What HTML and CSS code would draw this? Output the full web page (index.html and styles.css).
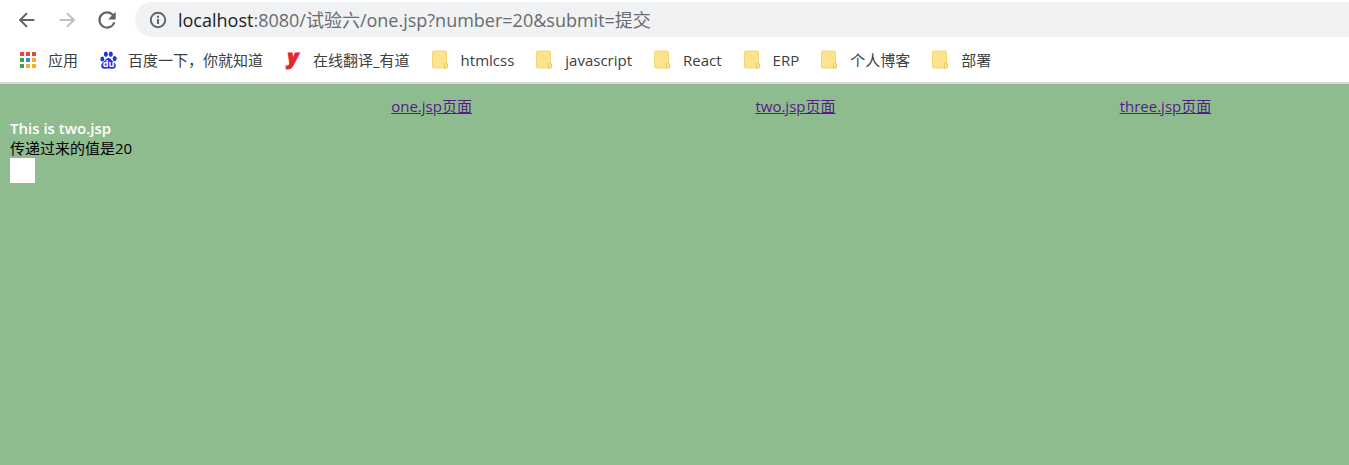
FILE: index.html
```html
<!DOCTYPE html>
<html lang="zh-CN">
<head>
<meta charset="utf-8">
<title>two.jsp</title>
<link rel="stylesheet" href="styles.css">
</head>
<body>
<svg class="symbols" aria-hidden="true">
  <symbol id="folder" viewBox="0 0 18 20">
    <path d="M1.5 1h12a1 1 0 0 1 1 1v16H1.5a1 1 0 0 1-1-1V2a1 1 0 0 1 1-1z" fill="#fde38d" stroke="#f4d77c"/>
    <path d="M12.500 18v-4.500l1-1h1l1 1.500v3.500l-1 .5z" fill="#fde58c" stroke="#efc955"/>
  </symbol>
</svg>
<header class="browser">
  <div class="toolbar">
    <button class="tool" aria-label="后退">
      <svg viewBox="0 0 24 24"><path d="M20 12H5M12 4.500 4.500 12l7.500 7.500" fill="none" stroke="#5f6368" stroke-width="2.200"/></svg>
    </button>
    <button class="tool" aria-label="前进" disabled>
      <svg viewBox="0 0 24 24"><path d="M4 12h15M12 4.500 19.500 12 12 19.500" fill="none" stroke="#bdbfc2" stroke-width="2.200"/></svg>
    </button>
    <button class="tool" aria-label="刷新">
      <svg viewBox="0 0 24 24"><path d="M18.700 7A8.300 8.300 0 1 0 20 14.500" fill="none" stroke="#5f6368" stroke-width="2.300"/><path d="M21.500 3v8.500H13z" fill="#5f6368"/></svg>
    </button>
    <div class="address">
      <svg class="info" viewBox="0 0 18 18"><circle cx="9" cy="9" r="7.200" fill="none" stroke="#5f6368" stroke-width="1.900"/><path d="M9 8v5M9 4.800v2" stroke="#5f6368" stroke-width="2"/></svg>
      <span class="url"><span class="host">localhost</span>:8080/试验六/one.jsp?number=20&amp;submit=提交</span>
    </div>
  </div>
  <nav class="bookmarks" aria-label="书签">
    <a href="#"><svg viewBox="0 0 18 20">
      <path d="M0 2h4v4H0zM6 2h4v4H6zM12 2h4v4h-4z" fill="#e04a3f"/>
      <path d="M0 8h4v4H0zM0 14h4v4H0z" fill="#34a156"/>
      <path d="M6 8h4v4H6z" fill="#3288e6"/>
      <path d="M12 8h4v4h-4zM6 14h4v4H6zM12 14h4v4h-4z" fill="#f4b029"/>
    </svg>应用</a>
    <a href="#"><svg viewBox="0 0 18 20">
      <g fill="#2a2fd6"><ellipse cx="2.300" cy="9" rx="2" ry="2.600"/><ellipse cx="5.900" cy="4.200" rx="2" ry="2.700"/><ellipse cx="10.800" cy="4.200" rx="2" ry="2.700"/><ellipse cx="14.700" cy="8.600" rx="2" ry="2.600"/>
      <path d="M8.400 8c2.300 0 3 2.200 4.600 3.500 1.800 1.400 3.500 3.200 2.600 5.400-1 2.300-4.100 1.700-7.200 1.700s-6 .6-7-1.700c-.9-2.200.8-4 2.500-5.400C5.500 10.200 6.100 8 8.400 8z"/></g>
      <text x="8.500" y="17" class="baidu-mark">du</text>
    </svg>百度一下，你就知道</a>
    <a href="#"><svg viewBox="0 0 18 20"><text x="8" y="14" class="youdao-mark">y</text></svg>在线翻译_有道</a>
    <a class="folder" href="#"><svg><use href="#folder"/></svg>htmlcss</a>
    <a class="folder" href="#"><svg><use href="#folder"/></svg>javascript</a>
    <a class="folder" href="#"><svg><use href="#folder"/></svg>React</a>
    <a class="folder" href="#"><svg><use href="#folder"/></svg>ERP</a>
    <a class="folder" href="#"><svg><use href="#folder"/></svg>个人博客</a>
    <a class="folder" href="#"><svg><use href="#folder"/></svg>部署</a>
  </nav>
</header>
<main class="page">
  <nav class="links">
    <a href="#">one.jsp页面</a>
    <a href="#">two.jsp页面</a>
    <a href="#">three.jsp页面</a>
  </nav>
  <section class="result">
    <p class="title">This is two.jsp</p>
    <p>传递过来的值是20</p>
    <div class="box"></div>
  </section>
</main>
</body>
</html>
```
FILE: styles.css
```css
* { box-sizing: border-box; }
body {
  margin: 0;
  min-height: 100vh;
  display: flex;
  flex-direction: column;
  font: 15px/20px "Open Sans", "Noto Sans CJK SC", sans-serif;
  color: #000;
}
.symbols { display: none; }
.browser { background: #fff; border-bottom: 2px solid #d3d9d4; }
.toolbar { display: flex; align-items: center; padding: 2px 0 0 15px; }
.tool {
  width: 24px;
  height: 24px;
  margin-right: 16px;
  padding: 1px;
  border: 0;
  background: none;
}
.tool svg { display: block; width: 22px; height: 22px; }
.address {
  flex: 1;
  display: flex;
  align-items: center;
  gap: 11px;
  height: 35px;
  padding-left: 14px;
  border-radius: 18px 0 0 18px;
  background: #f1f2f4;
  font-size: 18px;
  color: #686b6f;
}
.info { width: 18px; height: 18px; }
.url { white-space: nowrap; }
.host { color: #202124; }
.bookmarks {
  display: flex;
  gap: 22px;
  height: 45px;
  padding: 0 20px;
  align-items: center;
}
.bookmarks a {
  display: flex;
  align-items: center;
  gap: 10px;
  color: #3c4043;
  text-decoration: none;
  white-space: nowrap;
}
.bookmarks .folder { gap: 11px; }
.bookmarks svg { width: 18px; height: 20px; overflow: visible; }
.baidu-mark { font: bold 9px "Open Sans", sans-serif; fill: #fff; text-anchor: middle; }
.youdao-mark {
  font: italic 800 20px "Open Sans", sans-serif;
  fill: #e4262f;
  stroke: #e4262f;
  text-anchor: middle;
}
.page { flex: 1; background: #8fbc8f; padding-top: 12px; }
.links { display: grid; grid-template-columns: 29% 27% 27% 1fr; }
.links a { justify-self: start; color: #551a8b; white-space: nowrap; }
.links a:first-child { grid-column: 2; }
.result { padding: 2px 10px; }
.result p { margin: 0; }
.result .title { color: #fff; font-weight: 600; }
.box { width: 25px; height: 25px; background: #fff; }
```
